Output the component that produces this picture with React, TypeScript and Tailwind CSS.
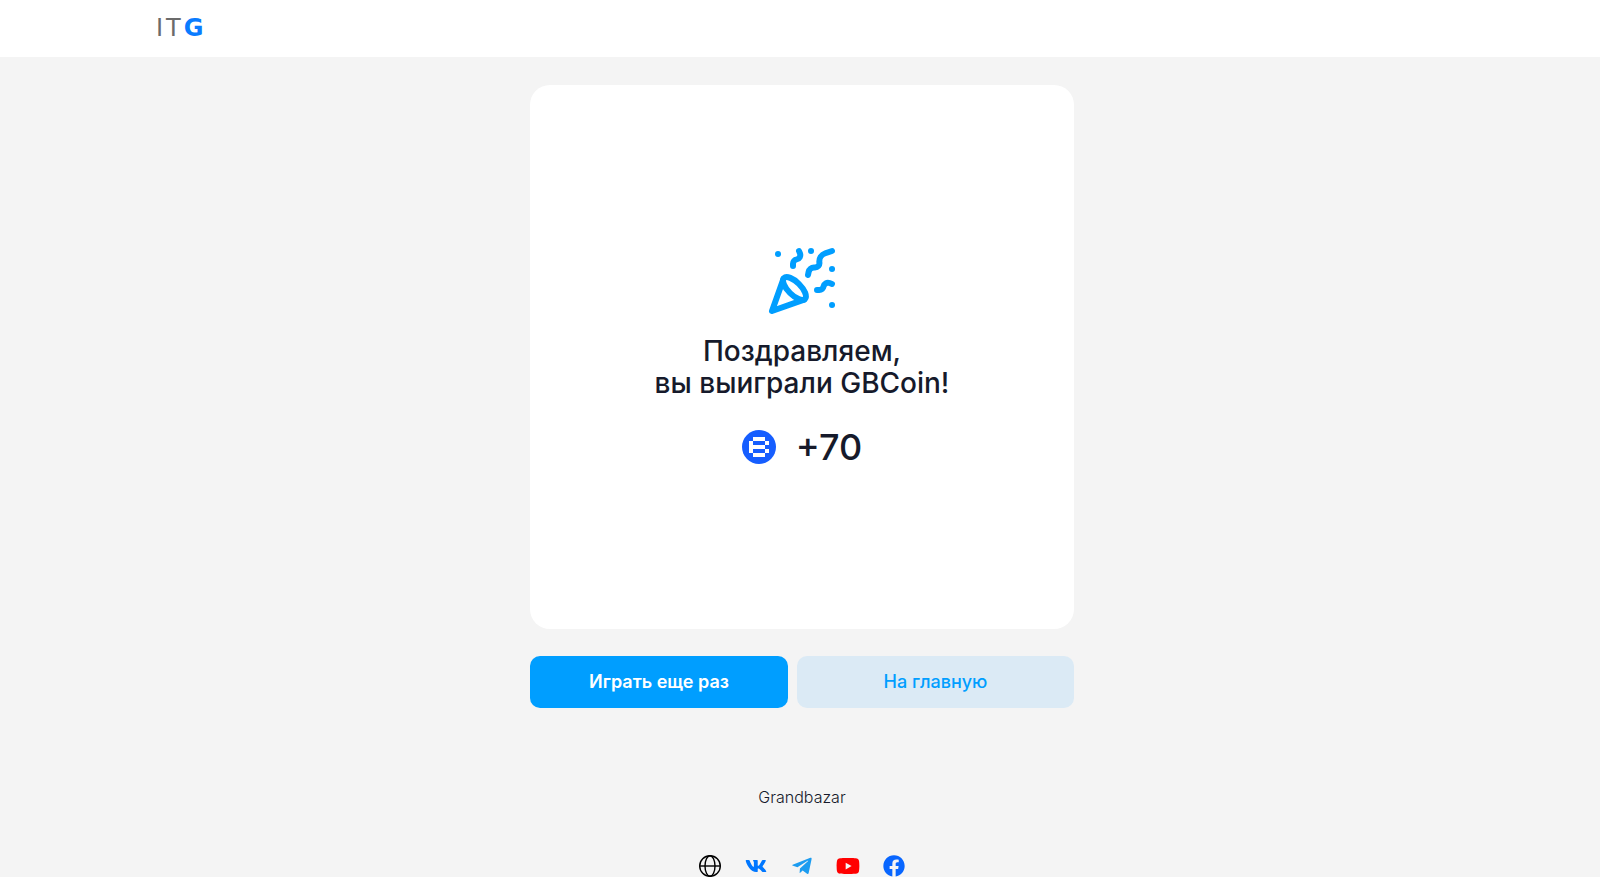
import React from "react";
import { FaFacebook, FaTelegramPlane, FaVk, FaYoutube } from "react-icons/fa";

function PartyIcon() {
  return (
    <svg
      className="size-[72px] text-[#009eff]"
      viewBox="0 0 24 24"
      fill="none"
      stroke="currentColor"
      strokeWidth="2"
      strokeLinecap="round"
      strokeLinejoin="round"
      aria-hidden="true"
    >
      <path d="M5.8 11.3 2 22l10.7-3.79" />
      <path d="M4 3h.01M22 8h.01M15 2h.01M22 20h.01" />
      <path d="m22 2-2.24.75a2.9 2.9 0 0 0-1.96 3.12c.1.86-.57 1.63-1.45 1.63h-.38c-.86 0-1.6.6-1.76 1.44L14 10" />
      <path d="m22 13-.82-.33c-.86-.34-1.82.2-1.98 1.11c-.11.7-.72 1.22-1.43 1.22H17" />
      <path d="m11 2 .33.82c.34.86-.2 1.82-1.11 1.98C9.52 4.9 9 5.52 9 6.23V7" />
      <path d="M11 13c1.93 1.93 2.83 4.17 2 5-.83.83-3.07-.07-5-2-1.93-1.93-2.83-4.17-2-5 .83-.83 3.07.07 5 2Z" />
    </svg>
  );
}

function CoinIcon() {
  return (
    <svg className="size-[34px]" viewBox="0 0 34 34" aria-hidden="true">
      <circle cx="17" cy="17" r="17" fill="#165eff" />
      <g fill="#fff">
        <rect x="11" y="7" width="12" height="4" />
        <rect x="7" y="11" width="4" height="12" />
        <rect x="23" y="11" width="4" height="4" />
        <rect x="11" y="15" width="12" height="4" />
        <rect x="23" y="19" width="4" height="4" />
        <rect x="11" y="23" width="12" height="4" />
      </g>
    </svg>
  );
}

function GlobeIcon() {
  return (
    <svg className="size-[22px]" viewBox="0 0 22 22" fill="none" stroke="#000" strokeWidth="1.4" aria-hidden="true">
      <circle cx="11" cy="11" r="10.3" />
      <ellipse cx="11" cy="11" rx="5" ry="10.3" />
      <path d="M.7 11h20.6" />
    </svg>
  );
}

const socials = [
  { label: "Сайт", icon: <GlobeIcon /> },
  { label: "ВКонтакте", icon: <FaVk className="size-[22px] text-[#0077ff]" /> },
  { label: "Telegram", icon: <FaTelegramPlane className="size-[22px] text-[#1c9cf0]" /> },
  { label: "YouTube", icon: <FaYoutube className="size-6 shrink-0 text-[#ff0000]" /> },
  { label: "Facebook", icon: <FaFacebook className="size-[22px] text-[#0866ff]" /> },
];

export default function App() {
  return (
    <div className="flex min-h-screen flex-col bg-[#f4f4f4] font-['Inter','Open_Sans',sans-serif] text-[#161a2b]">
      <header className="h-[57px] bg-white px-[156px] pt-3">
        <a href="#" className="inline-flex gap-[3px] font-['DejaVu_Sans',sans-serif] text-2xl text-[#6b6b6b]">
          <span>I</span>
          <span>T</span>
          <span className="font-bold text-[#0a7cff]">G</span>
        </a>
      </header>
      <main className="flex flex-col items-center pt-7 pl-1">
        <div className="w-full max-w-[544px]">
          <section className="flex aspect-square flex-col items-center justify-center rounded-[20px] bg-white pt-0.5 text-center">
            <PartyIcon />
            <h1 className="mt-[18px] text-[28px] leading-8 font-medium">
              Поздравляем,
              <br />
              вы выиграли GBCoin!
            </h1>
            <div className="mt-6 flex items-center gap-5">
              <CoinIcon />
              <span className="text-[36px] leading-[48px] font-medium">+70</span>
            </div>
          </section>
          <div className="mt-[27px] grid grid-cols-[258fr_277fr] gap-[9px]">
            <button type="button" className="h-[52px] rounded-[10px] bg-[#009eff] text-lg font-semibold text-white">
              Играть еще раз
            </button>
            <button type="button" className="h-[52px] rounded-[10px] bg-[#dbeaf5] text-lg font-medium text-[#009eff]">
              На главную
            </button>
          </div>
        </div>
      </main>
      <footer className="flex flex-col items-center pt-[77px] pl-1">
        <p className="text-base leading-6 font-light">Grandbazar</p>
        <nav className="mt-[46px] flex gap-6">
          {socials.map((s) => (
            <a key={s.label} href="#" aria-label={s.label} className="flex size-[22px] items-center justify-center">
              {s.icon}
            </a>
          ))}
        </nav>
      </footer>
    </div>
  );
}
